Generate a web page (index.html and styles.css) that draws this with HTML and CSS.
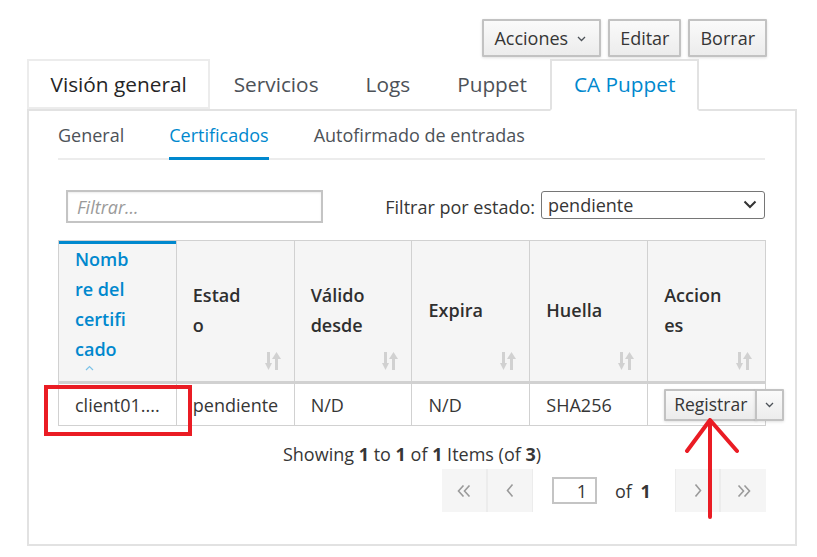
FILE: index.html
```html
<!DOCTYPE html>
<html lang="es">
<head>
<meta charset="utf-8">
<title>CA Puppet</title>
<link rel="stylesheet" href="styles.css">
</head>
<body>
<div class="page">
  <div class="toolbar">
    <button class="btn btn-actions">Acciones <svg class="btn-caret" width="9" height="6" viewBox="0 0 9 6"><polyline points="1,1 4.5,4.5 8,1" fill="none" stroke="#4d5258" stroke-width="1.3"/></svg></button>
    <button class="btn">Editar</button>
    <button class="btn">Borrar</button>
  </div>
  <ul class="tabs">
    <li class="tab tab-focus">Visión general</li>
    <li class="tab">Servicios</li>
    <li class="tab">Logs</li>
    <li class="tab">Puppet</li>
    <li class="tab tab-active">CA Puppet</li>
  </ul>
  <div class="panel">
    <ul class="subtabs">
      <li class="subtab">General</li>
      <li class="subtab subtab-active">Certificados</li>
      <li class="subtab">Autofirmado de entradas</li>
    </ul>
    <div class="filters">
      <input class="filter-input" type="text" placeholder="Filtrar...">
      <div class="state-filter">
        <span class="state-label">Filtrar por estado:</span>
        <span class="select-wrap">
          <select class="select"><option>pendiente</option></select>
          <svg class="select-caret" width="14" height="9" viewBox="0 0 14 9"><polyline points="1.5,1.5 7,7 12.5,1.5" fill="none" stroke="#333" stroke-width="2"/></svg>
        </span>
      </div>
    </div>
    <table class="cert-table">
      <thead>
        <tr>
          <th class="th-sorted">Nombre del certificado<span class="sort-dir"><svg width="9" height="6" viewBox="0 0 9 6"><polyline points="1,5 4.5,1.5 8,5" fill="none" stroke="#7dc3e8" stroke-width="1.2"/></svg></span></th>
          <th>Estado<svg class="sort-icon" width="16" height="18" viewBox="0 0 16 18"><rect x="2" y="0" width="3" height="12" fill="#d1d1d1"/><polygon points="0,11 7,11 3.5,18" fill="#d1d1d1"/><polygon points="11.5,0 16,7 7,7" fill="#d1d1d1"/><rect x="10" y="6" width="3" height="12" fill="#d1d1d1"/></svg></th>
          <th>Válido desde<svg class="sort-icon" width="16" height="18" viewBox="0 0 16 18"><rect x="2" y="0" width="3" height="12" fill="#d1d1d1"/><polygon points="0,11 7,11 3.5,18" fill="#d1d1d1"/><polygon points="11.5,0 16,7 7,7" fill="#d1d1d1"/><rect x="10" y="6" width="3" height="12" fill="#d1d1d1"/></svg></th>
          <th>Expira<svg class="sort-icon" width="16" height="18" viewBox="0 0 16 18"><rect x="2" y="0" width="3" height="12" fill="#d1d1d1"/><polygon points="0,11 7,11 3.5,18" fill="#d1d1d1"/><polygon points="11.5,0 16,7 7,7" fill="#d1d1d1"/><rect x="10" y="6" width="3" height="12" fill="#d1d1d1"/></svg></th>
          <th>Huella<svg class="sort-icon" width="16" height="18" viewBox="0 0 16 18"><rect x="2" y="0" width="3" height="12" fill="#d1d1d1"/><polygon points="0,11 7,11 3.5,18" fill="#d1d1d1"/><polygon points="11.5,0 16,7 7,7" fill="#d1d1d1"/><rect x="10" y="6" width="3" height="12" fill="#d1d1d1"/></svg></th>
          <th>Acciones<svg class="sort-icon" width="16" height="18" viewBox="0 0 16 18"><rect x="2" y="0" width="3" height="12" fill="#d1d1d1"/><polygon points="0,11 7,11 3.5,18" fill="#d1d1d1"/><polygon points="11.5,0 16,7 7,7" fill="#d1d1d1"/><rect x="10" y="6" width="3" height="12" fill="#d1d1d1"/></svg></th>
        </tr>
      </thead>
      <tbody>
        <tr>
          <td>client01....</td>
          <td>pendiente</td>
          <td>N/D</td>
          <td>N/D</td>
          <td>SHA256</td>
          <td class="td-actions">
            <span class="btn-group">
              <button class="btn btn-sm">Registrar</button><button class="btn btn-sm btn-split"><svg width="9" height="6" viewBox="0 0 9 6"><polyline points="1,1 4.5,4.5 8,1" fill="none" stroke="#4d5258" stroke-width="1.3"/></svg></button>
            </span>
          </td>
        </tr>
      </tbody>
    </table>
    <div class="summary">Showing <b>1</b> to <b>1</b> of <b>1</b> Items (of <b>3</b>)</div>
    <div class="pager">
      <span class="pg-btn pg-first"><svg width="14" height="12" viewBox="0 0 14 12"><polyline points="6.5,0.5 1.5,6 6.5,11.5" fill="none" stroke="#9a9a9a" stroke-width="1.6"/><polyline points="12.5,0.5 7.5,6 12.5,11.5" fill="none" stroke="#9a9a9a" stroke-width="1.6"/></svg></span>
      <span class="pg-btn pg-prev"><svg width="8" height="13" viewBox="0 0 8 13"><polyline points="6.5,0.5 1.5,6.5 6.5,12.5" fill="none" stroke="#9a9a9a" stroke-width="1.6"/></svg></span>
      <span class="pg-page">
        <input class="pg-input" type="text" value="1">
        <span class="pg-of">of <b>1</b></span>
      </span>
      <span class="pg-btn pg-next"><svg width="8" height="13" viewBox="0 0 8 13"><polyline points="1.5,0.5 6.5,6.5 1.5,12.5" fill="none" stroke="#9a9a9a" stroke-width="1.6"/></svg></span>
      <span class="pg-btn pg-last"><svg width="14" height="12" viewBox="0 0 14 12"><polyline points="1.5,0.5 6.5,6 1.5,11.5" fill="none" stroke="#9a9a9a" stroke-width="1.6"/><polyline points="7.5,0.5 12.5,6 7.5,11.5" fill="none" stroke="#9a9a9a" stroke-width="1.6"/></svg></span>
    </div>
  </div>
</div>
<svg class="annotations" width="817" height="557" viewBox="0 0 817 557">
  <rect x="46" y="387" width="144" height="47" fill="none" stroke="#ea1c24" stroke-width="4"/>
  <path d="M710 517 L710 420 M687 451 L710 420 L737 451" fill="none" stroke="#ea1c24" stroke-width="4" stroke-linecap="round" stroke-linejoin="round"/>
</svg>
</body>
</html>
```

FILE: styles.css
```css
* { box-sizing: border-box; }

html, body {
  margin: 0;
  padding: 0;
  background: #fff;
}

body {
  font-family: "Open Sans", "Liberation Sans", sans-serif;
  color: #363636;
  font-size: 18px;
  position: relative;
  width: 817px;
  height: 557px;
  overflow: hidden;
}

.page {
  width: 770px;
  margin-left: 27px;
  padding-top: 19px;
}

/* Toolbar */
.toolbar {
  display: flex;
  justify-content: flex-end;
  gap: 7px;
  padding-right: 30px;
}

.btn {
  font-family: inherit;
  font-size: 18px;
  color: #363636;
  height: 38px;
  padding: 0 10px;
  border: 2px solid #c2c2c2;
  border-radius: 1px;
  background: linear-gradient(#fafafa, #ececec);
  box-shadow: 0 1px 3px rgba(0, 0, 0, 0.12);
  display: inline-flex;
  align-items: center;
  gap: 9px;
  line-height: 1;
}

.btn-actions { padding-right: 13px; }

.btn-caret { display: block; margin-top: 2px; }

/* Main tabs */
.tabs {
  list-style: none;
  margin: 2px 0 0;
  padding: 0;
  display: flex;
  height: 50px;
  position: relative;
  z-index: 1;
}

.tab {
  padding: 0 21.5px;
  border: 2px solid transparent;
  font-size: 20.8px;
  line-height: 47px;
  color: #4d5258;
  white-space: nowrap;
}

.tab-focus {
  border-color: #ececec;
  color: #252525;
}

.tab-active {
  border-color: #e2e2e2;
  border-bottom-color: #fff;
  background: #fff;
  color: #0088ce;
  height: 52px;
}

/* Panel */
.panel {
  margin-top: 0;
  border: 2px solid #e2e2e2;
  height: 437px;
  padding: 9px 30px 0 29px;
}

.subtabs {
  list-style: none;
  margin: 0;
  padding: 0;
  display: flex;
  gap: 45px;
  border-bottom: 2px solid #ececec;
}

.subtab {
  font-size: 18px;
  line-height: 30px;
  padding-bottom: 8px;
  color: #4d5258;
  position: relative;
}

.subtab-active { color: #0088ce; }

.subtab-active::after {
  content: "";
  position: absolute;
  left: 0;
  right: 0;
  bottom: -2px;
  height: 3px;
  background: #0088ce;
}

/* Filters */
.filters {
  margin-top: 30px;
  display: flex;
  justify-content: space-between;
  align-items: center;
  padding-left: 8px;
  height: 33px;
}

.filter-input {
  width: 257px;
  height: 33px;
  border: 2px solid #c4c4c4;
  box-shadow: inset 0 1px 2px rgba(0, 0, 0, 0.08);
  padding: 0 9px;
  font-family: inherit;
  font-size: 18px;
  color: #363636;
  outline: none;
}

.filter-input::placeholder {
  font-style: italic;
  color: #9a9a9a;
}

.state-filter {
  display: flex;
  align-items: center;
  gap: 6px;
}

.state-label { font-size: 18px; }

.select-wrap {
  position: relative;
  display: block;
  margin-top: -3px;
}

.select {
  appearance: none;
  -webkit-appearance: none;
  width: 224px;
  height: 28px;
  border: 1px solid #767676;
  border-radius: 3px;
  background: #fff;
  font-family: inherit;
  font-size: 18px;
  color: #363636;
  padding: 0 0 0 6px;
  display: block;
}

.select-caret {
  position: absolute;
  right: 8px;
  top: 9px;
  pointer-events: none;
}

/* Table */
.cert-table {
  margin-top: 17px;
  width: 708px;
  table-layout: fixed;
  border-collapse: separate;
  border-spacing: 0;
  border-top: 1px solid #d1d1d1;
  border-left: 1px solid #d1d1d1;
}

.cert-table th,
.cert-table td {
  border-right: 1px solid #d1d1d1;
  border-bottom: 1px solid #d1d1d1;
  text-align: left;
}

.cert-table th {
  position: relative;
  background: #f5f5f5;
  font-weight: 600;
  color: #2f2f2f;
  font-size: 18px;
  line-height: 30px;
  padding: 0 43.3px 3px 16px;
  height: 143px;
  overflow-wrap: anywhere;
  vertical-align: middle;
  border-bottom-width: 3px;
}

.cert-table th.th-sorted {
  color: #0088ce;
  box-shadow: inset 0 3px 0 #0088ce;
  vertical-align: top;
  padding-top: 3px;
  padding-bottom: 0;
}

.sort-dir {
  display: block;
  height: 14px;
  padding-left: 10px;
  line-height: 0;
}

.sort-dir svg { display: block; margin-top: 1px; }

.sort-icon {
  position: absolute;
  right: 13px;
  bottom: 11px;
}

.cert-table td {
  height: 42px;
  padding: 0 16px;
  font-size: 18px;
  white-space: nowrap;
  vertical-align: middle;
}

.td-actions { overflow: visible; }

.btn-group {
  display: inline-flex;
  vertical-align: middle;
}

.btn-sm {
  height: 32px;
  padding: 0 8px;
  font-size: 17.5px;
}

.btn-split {
  margin-left: -2px;
  width: 29px;
  padding: 0;
  justify-content: center;
}

/* Summary & pager */
.summary {
  margin-top: 14px;
  line-height: 29px;
  text-align: center;
  font-size: 18px;
  width: 708px;
}

.summary b { font-weight: 700; }

.pager {
  width: 708px;
  display: flex;
  justify-content: flex-end;
  height: 43px;
}

.pg-btn {
  display: flex;
  align-items: center;
  justify-content: center;
  background: #f5f5f5;
  height: 43px;
}

.pg-first { width: 46px; border-right: 2px solid #ececec; }
.pg-prev { width: 44px; }
.pg-next { width: 45px; border-right: 2px solid #ececec; }
.pg-last { width: 45px; }

.pg-page {
  width: 144px;
  display: flex;
  align-items: center;
  padding-left: 19px;
  border-left: 1px solid #ececec;
  border-right: 1px solid #ececec;
}

.pg-input {
  width: 45px;
  height: 27px;
  border: 2px solid #c4c4c4;
  text-align: right;
  padding: 0 8px 0 0;
  font-family: inherit;
  font-size: 18px;
  color: #363636;
}

.pg-of {
  margin-left: 18px;
  font-size: 18px;
  word-spacing: 4px;
}

/* Annotations overlay */
.annotations {
  position: absolute;
  left: 0;
  top: 0;
  pointer-events: none;
}
```
